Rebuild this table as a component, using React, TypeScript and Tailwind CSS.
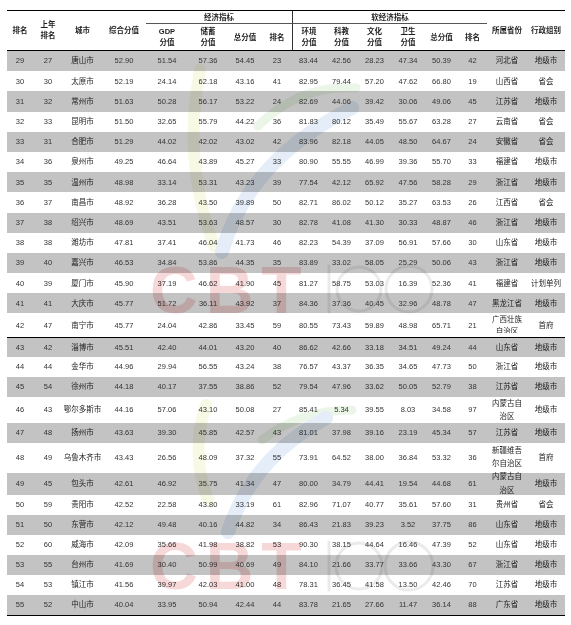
import React from "react";

const W = [
  "w-[26px]", "w-[30px]", "w-[39px]", "w-[44px]", "w-[42px]", "w-[40px]", "w-[34px]", "w-[30px]",
  "w-[33px]", "w-[33px]", "w-[33px]", "w-[34px]", "w-[33px]", "w-[29px]", "w-[40px]", "w-[38px]",
];

type Row = { h: string; d: (string | React.ReactNode)[]; top?: boolean };

const r = (h: string, s: string, prov?: React.ReactNode): Row => {
  const parts = s.split(" ");
  const d: (string | React.ReactNode)[] = parts;
  if (prov) d[14] = prov;
  return { h, d };
};

const two = (a: string, b: string, lh: string) => (
  <div className={`${lh}`}>
    <div>{a}</div>
    <div>{b}</div>
  </div>
);

const rows: Row[] = [
  r("h-[20.2px]", "29 27 唐山市 52.90 51.54 57.36 54.45 23 83.44 42.56 28.23 47.34 50.39 42 河北省 地级市"),
  r("h-[20.2px]", "30 30 太原市 52.19 24.14 62.18 43.16 41 82.95 79.44 57.20 47.62 66.80 19 山西省 省会"),
  r("h-[20.2px]", "31 32 常州市 51.63 50.28 56.17 53.22 24 82.69 44.06 39.42 30.06 49.06 45 江苏省 地级市"),
  r("h-[20.2px]", "32 33 昆明市 51.50 32.65 55.79 44.22 36 81.83 80.12 35.49 55.67 63.28 27 云南省 省会"),
  r("h-[20.2px]", "33 31 合肥市 51.29 44.02 42.02 43.02 42 83.96 82.18 44.05 48.50 64.67 24 安徽省 省会"),
  r("h-[20.2px]", "34 36 泉州市 49.25 46.64 43.89 45.27 33 80.90 55.55 46.99 39.36 55.70 33 福建省 地级市"),
  r("h-[20.2px]", "35 35 温州市 48.98 33.14 53.31 43.23 39 77.54 42.12 65.92 47.56 58.28 29 浙江省 地级市"),
  r("h-[20.2px]", "36 37 南昌市 48.92 36.28 43.50 39.89 50 82.71 86.02 50.12 35.27 63.53 26 江西省 省会"),
  r("h-[20.2px]", "37 38 绍兴市 48.69 43.51 53.63 48.57 30 82.78 41.08 41.30 30.33 48.87 46 浙江省 地级市"),
  r("h-[20.2px]", "38 38 潍坊市 47.81 37.41 46.04 41.73 46 82.23 54.39 37.09 56.91 57.66 30 山东省 地级市"),
  r("h-[20.2px]", "39 40 嘉兴市 46.53 34.84 53.86 44.35 35 83.89 33.02 58.05 25.29 50.06 43 浙江省 地级市"),
  r("h-[20.2px]", "40 39 厦门市 45.90 37.19 46.62 41.90 45 81.27 58.75 53.03 16.39 52.36 41 福建省 计划单列"),
  r("h-[20.2px]", "41 41 大庆市 45.77 51.72 36.11 43.92 37 84.36 37.36 40.45 32.96 48.78 47 黑龙江省 地级市"),
  r(
    "h-[24px]",
    "42 47 南宁市 45.77 24.04 42.86 33.45 59 80.55 73.43 59.89 48.98 65.71 21 x 首府",
    <div className="h-[19px] overflow-hidden leading-[12px] mb-[3px]">
      <div>广西壮族</div>
      <div>自治区</div>
    </div>
  ),
  { ...r("h-[19.7px]", "43 42 淄博市 45.51 42.40 44.01 43.20 40 86.62 42.66 33.18 34.51 49.24 44 山东省 地级市"), top: true },
  r("h-[19.7px]", "44 44 金华市 44.96 29.94 56.55 43.24 38 76.57 43.37 36.35 34.65 47.73 50 浙江省 地级市"),
  r("h-[19.7px]", "45 54 徐州市 44.18 40.17 37.55 38.86 52 79.54 47.96 33.62 50.05 52.79 38 江苏省 地级市"),
  r(
    "h-[26px]",
    "46 43 鄂尔多斯市 44.16 57.06 43.10 50.08 27 85.41 5.34 39.55 8.03 34.58 97 x 地级市",
    two("内蒙古自", "治区", "leading-[13px]")
  ),
  r("h-[20px]", "47 48 扬州市 43.63 39.30 45.85 42.57 43 81.01 37.98 39.16 23.19 45.34 57 江苏省 地级市"),
  r(
    "h-[30px]",
    "48 49 乌鲁木齐市 43.43 26.56 48.09 37.32 55 73.91 64.52 38.00 36.84 53.32 36 x 首府",
    two("新疆维吾", "尔自治区", "leading-[12.5px]")
  ),
  r(
    "h-[22px]",
    "49 45 包头市 42.61 46.92 35.75 41.34 47 80.00 34.79 44.41 19.54 44.68 61 x 地级市",
    two("内蒙古自", "治区", "leading-[13.5px]")
  ),
  r("h-[20px]", "50 59 贵阳市 42.52 22.58 43.80 33.19 61 82.96 71.07 40.77 35.61 57.60 31 贵州省 省会"),
  r("h-[20px]", "51 50 东营市 42.12 49.48 40.16 44.82 34 86.43 21.83 39.23 3.52 37.75 86 山东省 地级市"),
  r("h-[20px]", "52 60 威海市 42.09 35.66 41.98 38.82 53 90.30 38.15 44.64 16.46 47.39 52 山东省 地级市"),
  r("h-[20px]", "53 55 台州市 41.69 30.40 50.99 40.69 49 84.10 21.66 33.77 33.66 43.30 67 浙江省 地级市"),
  r("h-[20px]", "54 53 镇江市 41.56 39.97 42.03 41.00 48 78.31 36.45 41.58 13.50 42.46 70 江苏省 地级市"),
  r("h-[20px]", "55 52 中山市 40.04 33.95 50.94 42.44 44 83.78 21.65 27.66 11.47 36.14 88 广东省 地级市"),
];

function HeaderCell({ className, children }: { className: string; children: React.ReactNode }) {
  return (
    <div className={`flex items-center justify-center text-center font-bold leading-[11px] ${className}`}>
      <div>{children}</div>
    </div>
  );
}

function Header() {
  return (
    <div className="grid grid-cols-[26px_30px_39px_44px_42px_40px_34px_30px_33px_33px_33px_34px_33px_29px_40px_38px] grid-rows-[13px_26px] border-t border-black border-b-[1.5px] text-[7.5px] text-[#1e1e1e]">
      <HeaderCell className="row-span-2 col-start-1 row-start-1 pb-[1px]">排名</HeaderCell>
      <HeaderCell className="row-span-2 col-start-2 row-start-1 pb-[1px]">
        上年
        <br />
        排名
      </HeaderCell>
      <HeaderCell className="row-span-2 col-start-3 row-start-1 pb-[1px]">城市</HeaderCell>
      <HeaderCell className="row-span-2 col-start-4 row-start-1 pb-[1px]">综合分值</HeaderCell>
      <HeaderCell className="col-span-4 col-start-5 row-start-1 border-b border-[#555]">经济指标</HeaderCell>
      <HeaderCell className="col-span-6 col-start-9 row-start-1 border-b border-l border-[#333] border-b-[#555]">软经济指标</HeaderCell>
      <HeaderCell className="row-span-2 col-start-15 row-start-1 pb-[1px]">所属省份</HeaderCell>
      <HeaderCell className="row-span-2 col-start-16 row-start-1 pb-[1px]">行政组别</HeaderCell>
      <HeaderCell className="col-start-5 row-start-2">
        GDP
        <br />
        分值
      </HeaderCell>
      <HeaderCell className="col-start-6 row-start-2">
        储蓄
        <br />
        分值
      </HeaderCell>
      <HeaderCell className="col-start-7 row-start-2">总分值</HeaderCell>
      <HeaderCell className="col-start-8 row-start-2">排名</HeaderCell>
      <HeaderCell className="col-start-9 row-start-2 border-l border-[#333]">
        环境
        <br />
        分值
      </HeaderCell>
      <HeaderCell className="col-start-10 row-start-2">
        科教
        <br />
        分值
      </HeaderCell>
      <HeaderCell className="col-start-11 row-start-2">
        文化
        <br />
        分值
      </HeaderCell>
      <HeaderCell className="col-start-12 row-start-2">
        卫生
        <br />
        分值
      </HeaderCell>
      <HeaderCell className="col-start-13 row-start-2">总分值</HeaderCell>
      <HeaderCell className="col-start-14 row-start-2">排名</HeaderCell>
    </div>
  );
}

function Logo({ top }: { top: string }) {
  return (
    <div className={`absolute left-[150px] ${top} mix-blend-multiply pointer-events-none opacity-80`}>
      <span className="text-[66px] leading-none font-bold tracking-[8px] text-[#f5cfcf] font-['Liberation_Sans',sans-serif]">
        CBT
      </span>
    </div>
  );
}

export default function App() {
  return (
    <div className="relative w-[571px] h-[625px] bg-white overflow-hidden font-['Liberation_Sans','Noto_Sans_CJK_SC',sans-serif] text-[#262626]">
      <div className="pt-[10px] pl-[7px]">
        <div className="w-[558px]">
          <Header />
          <div className="border-b-[1.5px] border-black">
            {rows.map((row, i) => {
              const grey = i % 2 === 0;
              return (
                <div
                  key={i}
                  className={`flex ${row.h} ${grey ? "bg-[#c3c3c3]" : "bg-white"} ${row.top ? "border-t-[1.5px] border-black" : ""}`}
                >
                  {row.d.map((c, j) => {
                    const cjk = j === 2 || j === 14 || j === 15;
                    return (
                      <div
                        key={j}
                        className={`${W[j]} shrink-0 flex items-center justify-center text-center whitespace-nowrap ${
                          cjk ? "text-[7.5px] text-[#1c1c1c]" : "text-[7.5px] text-[#333]"
                        }`}
                      >
                        {c}
                      </div>
                    );
                  })}
                </div>
              );
            })}
          </div>
        </div>
      </div>

      {/* watermarks */}
      <svg
        className="absolute left-0 top-0 mix-blend-multiply pointer-events-none"
        width="571"
        height="625"
        viewBox="0 0 571 625"
      >
        <g fill="none" strokeLinecap="round" opacity="0.55">
          <path d="M200 70 Q182 160 214 246" stroke="#f1f5cf" strokeWidth="12" />
          <path d="M258 126 Q300 84 356 88" stroke="#dcefd6" strokeWidth="9" />
          <path d="M222 252 Q248 160 352 108" stroke="#cfe1f3" strokeWidth="14" />
          <line x1="329" y1="266" x2="329" y2="312" stroke="#d9d9d9" strokeWidth="3" />
          <circle cx="359" cy="289" r="22" stroke="#dadada" strokeWidth="3" />
          <circle cx="409" cy="289" r="23" stroke="#dadada" strokeWidth="3" />

          <path d="M206 405 Q190 452 208 500" stroke="#f1f5cf" strokeWidth="12" />
          <path d="M262 440 Q300 410 352 410" stroke="#dcefd6" strokeWidth="9" />
          <path d="M228 532 Q252 458 326 418" stroke="#cfe1f3" strokeWidth="14" />
          <line x1="329" y1="542" x2="329" y2="590" stroke="#d9d9d9" strokeWidth="3" />
          <circle cx="359" cy="566" r="23" stroke="#dadada" strokeWidth="3" />
          <circle cx="409" cy="566" r="24" stroke="#dadada" strokeWidth="3" />
        </g>
      </svg>
      <Logo top="top-[257px]" />
      <Logo top="top-[533px]" />
    </div>
  );
}
